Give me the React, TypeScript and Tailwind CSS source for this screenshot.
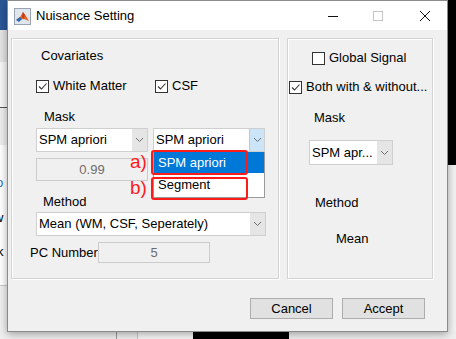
import type { ReactNode } from 'react';

function CheckBox({ checked = false }: { checked?: boolean }) {
  return (
    <span className="w-[13px] h-[13px] border border-[#333333] bg-white flex items-center justify-center shrink-0">
      {checked && (
        <svg width="11" height="11" viewBox="0 0 11 11">
          <path d="M2 5.5 L4.5 8 L9.5 2.5" fill="none" stroke="#333333" strokeWidth="1.1" />
        </svg>
      )}
    </span>
  );
}

function Chevron() {
  return (
    <svg width="9" height="6" viewBox="0 0 9 6">
      <path d="M1 1 L4.5 4.5 L8 1" fill="none" stroke="#707070" strokeWidth="1" />
    </svg>
  );
}

function Select({
  label,
  width,
  height = 'h-6',
  open = false,
  children,
}: {
  label: string;
  width: string;
  height?: string;
  open?: boolean;
  children?: ReactNode;
}) {
  return (
    <div className={`relative ${width} ${height} shrink-0`}>
      <div className="w-full h-full flex border border-[#cfcfcf] bg-white">
        <span className="flex-1 pl-[2px] flex items-center whitespace-nowrap overflow-hidden">{label}</span>
        <span
          className={`w-[15px] flex items-center justify-center ${open ? 'bg-[#cce4f7] border-l border-[#a8cdee]' : 'bg-[#e5e5e5]'}`}
        >
          <Chevron />
        </span>
      </div>
      {children}
    </div>
  );
}

function CheckRow({ checked, label }: { checked?: boolean; label: string }) {
  return (
    <div className="flex items-center h-4">
      <CheckBox checked={checked} />
      <span className="ml-1 whitespace-nowrap">{label}</span>
    </div>
  );
}

function MatlabIcon() {
  return (
    <svg width="17" height="17" viewBox="0 0 17 17">
      <rect x="0.5" y="0.5" width="16" height="16" fill="#dfe6ee" stroke="#9aa4b0" />
      <path d="M2 12 L6 9 L9 4 L12 8 L15 13 L10 11 Z" fill="#e0662c" />
      <path d="M2 12 L6 9 L8 11 L5 14 Z" fill="#2a6bb8" />
      <path d="M9 4 L11 7 L10 11 L8 9 Z" fill="#c43d16" />
    </svg>
  );
}

export default function App() {
  return (
    <div className="relative w-[456px] h-[339px] overflow-hidden bg-[#e9e9e9] font-['Liberation_Sans',Arial,sans-serif] text-[13px] text-black">
      {/* desktop behind the dialog */}
      <div className="absolute left-0 top-0 w-[8px] h-full flex flex-col">
        <div className="h-[30px] bg-[#2b5797] shrink-0" />
        <div className="h-[32px] bg-[#e4e4e4] shrink-0" />
        <div className="h-[46px] bg-[#f7f7f7] border-b border-[#555555] shrink-0" />
        <div className="h-[37px] bg-[#eeeeee] shrink-0" />
        <div className="h-[140px] bg-white relative shrink-0">
          <span className="absolute left-[-4px] top-[28px] text-[#2b6cc4]">o</span>
          <span className="absolute left-[-6px] top-[63px]">w</span>
          <span className="absolute left-[-3px] top-[97px]">k</span>
        </div>
        <div className="flex-1 bg-[#f0f0f0] border-t border-[#c8c8c8]" />
      </div>
      <div className="absolute right-0 top-0 w-[10px] h-full flex flex-col">
        <div className="h-[165px] bg-black shrink-0" />
        <div className="flex-1 bg-[#f2f2f2]" />
      </div>
      <div className="absolute left-0 bottom-0 w-full h-[8px] flex bg-[#efefef]">
        <div className="w-[116px] shrink-0" />
        <div className="w-[21px] border-l border-[#9a9a9a] shrink-0" />
        <div className="w-[56px] border-l border-[#c8c8c8] bg-[#f7f7f7] shrink-0" />
        <div className="w-[96px] bg-black shrink-0" />
      </div>

      {/* dialog window */}
      <div className="absolute left-[7px] top-0 w-[441px] h-[332px] border border-[#8a8a8a] bg-[#f0f0f0] shadow-[0_2px_8px_rgba(0,0,0,0.35)] flex flex-col">
        <div className="h-[29px] bg-white flex items-center shrink-0">
          <div className="ml-[6px] mt-[1px]">
            <MatlabIcon />
          </div>
          <span className="ml-[5px] text-[13px]">Nuisance Setting</span>
          <div className="ml-auto flex items-center">
            <svg width="12" height="12" viewBox="0 0 12 12" className="mr-[33px]">
              <path d="M1 6.5 H11" stroke="#111" strokeWidth="1" />
            </svg>
            <svg width="12" height="12" viewBox="0 0 12 12" className="mr-[35px]">
              <rect x="1.5" y="1.5" width="9" height="9" fill="none" stroke="#c4c4c4" />
            </svg>
            <svg width="12" height="12" viewBox="0 0 12 12" className="mr-[16px]">
              <path d="M1 1 L11 11 M11 1 L1 11" stroke="#111" strokeWidth="1" />
            </svg>
          </div>
        </div>

        <div className="flex gap-2 mt-2 ml-[3px]">
          {/* left panel */}
          <div className="w-[268px] h-[241px] border border-[#d3d3d3] shadow-[inset_1px_1px_0_#ffffff,1px_1px_0_#ffffff] flex flex-col">
            <div className="mt-[9px] ml-[29px] h-4 leading-4">Covariates</div>
            <div className="mt-[14px] ml-6 flex">
              <div className="w-[119px]">
                <CheckRow checked label="White Matter" />
              </div>
              <CheckRow checked label="CSF" />
            </div>
            <div className="mt-[15px] ml-8 h-4 leading-4">Mask</div>
            <div className="mt-[3px] ml-6 flex gap-[5px]">
              <Select label="SPM apriori" width="w-[112px]" />
              <Select label="SPM apriori" width="w-[112px]" open>
                <div className="absolute left-0 top-full w-[112px] h-[46px] border border-[#9a9a9a] border-t-0 bg-white flex flex-col">
                  <div className="h-[21px] bg-[#0078d7] text-white flex items-center pl-[4px]">SPM apriori</div>
                  <div className="h-[22px] flex items-center pl-[4px] pt-[2px]">Segment</div>
                </div>
                <div className="absolute left-[-2px] top-[22px] w-[97px] h-[25px] border-2 border-[#ff1a1a] rounded-[3px]" />
                <div className="absolute left-[-2px] top-[49px] w-[97px] h-[23px] border-2 border-[#ff1a1a] rounded-[3px]" />
                <span className="absolute left-[-23px] top-[23px] text-[19px] leading-[22px] text-[#ff1a1a]">a)</span>
                <span className="absolute left-[-23px] top-[49px] text-[19px] leading-[22px] text-[#ff1a1a]">b)</span>
              </Select>
            </div>
            <div className="mt-[6px] ml-6 w-[112px] h-[23px] border border-[#cccccc] bg-[#f0f0f0] flex items-center justify-center text-[#6d6d6d]">
              0.99
            </div>
            <div className="mt-[13px] ml-[31px] h-4 leading-4">Method</div>
            <div className="mt-[2px] ml-6">
              <Select label="Mean (WM, CSF, Seperately)" width="w-[230px]" />
            </div>
            <div className="mt-[6px] ml-[18px] flex items-center">
              <span className="w-[68px] whitespace-nowrap">PC Number</span>
              <div className="w-[112px] h-[21px] border border-[#cccccc] bg-[#f0f0f0] flex items-center justify-center text-[#6d6d6d]">
                5
              </div>
            </div>
          </div>

          {/* right panel */}
          <div className="w-[146px] h-[241px] border border-[#d3d3d3] shadow-[inset_1px_1px_0_#ffffff,1px_1px_0_#ffffff] flex flex-col">
            <div className="mt-[11px] ml-6">
              <CheckRow label="Global Signal" />
            </div>
            <div className="mt-[13px] ml-[1px]">
              <CheckRow checked label="Both with & without..." />
            </div>
            <div className="mt-[15px] ml-[26px] h-4 leading-4">Mask</div>
            <div className="mt-[14px] ml-[21px]">
              <Select label="SPM apr..." width="w-[84px]" height="h-[25px]" />
            </div>
            <div className="mt-[30px] ml-[27px] h-4 leading-4">Method</div>
            <div className="mt-[20px] ml-12 h-4 leading-4">Mean</div>
          </div>
        </div>

        <div className="mt-[19px] mr-[22px] flex justify-end gap-[9px]">
          <button type="button" className="w-[83px] h-[21px] bg-[#e1e1e1] border border-[#adadad] text-[13px]">
            Cancel
          </button>
          <button type="button" className="w-[83px] h-[21px] bg-[#e1e1e1] border border-[#adadad] text-[13px]">
            Accept
          </button>
        </div>
      </div>
    </div>
  );
}
